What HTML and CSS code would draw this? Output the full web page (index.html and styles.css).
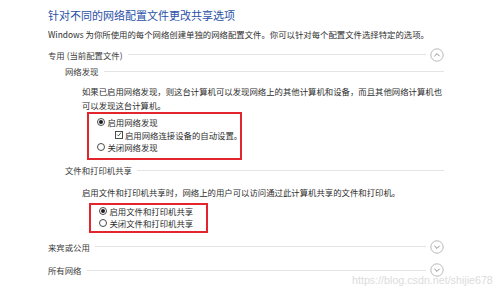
FILE: index.html
```html
<!DOCTYPE html>
<html lang="zh-CN">
<head>
    <meta charset="UTF-8">
    <title>高级共享设置</title>
    <link rel="stylesheet" href="styles.css">
</head>
<body>
    <div class="panel">
        <h1 class="title">针对不同的网络配置文件更改共享选项</h1>
        <p class="desc">Windows 为你所使用的每个网络创建单独的网络配置文件。你可以针对每个配置文件选择特定的选项。</p>

        <!-- 专用 -->
        <div class="section-row first">
            <span class="label">专用 (当前配置文件)</span>
            <span class="rule"></span>
            <svg class="toggle" width="14" height="14" viewBox="0 0 14 14">
                <circle cx="7" cy="7" r="6.2" fill="none" stroke="#b9b9b9" stroke-width="1"/>
                <path d="M4.4 8.2 L7 5.6 L9.6 8.2" fill="none" stroke="#8a8a8a" stroke-width="1"/>
            </svg>
        </div>

        <div class="sub-row discovery">
            <span class="label">网络发现</span>
            <span class="rule"></span>
        </div>
        <p class="para tall">如果已启用网络发现，则这台计算机可以发现网络上的其他计算机和设备，而且其他网络计算机也<br>可以发现这台计算机。</p>

        <div class="mark mark-discovery">
            <div class="opt"><span class="radio on"></span>启用网络发现</div>
            <div class="opt indent">
                <span class="check">
                    <svg width="7" height="7" viewBox="0 0 7 7"><path d="M1.3 3.6 L2.8 5.1 L5.8 1.4" fill="none" stroke="#222" stroke-width="0.9"/></svg>
                </span>启用网络连接设备的自动设置。
            </div>
            <div class="opt"><span class="radio"></span>关闭网络发现</div>
        </div>

        <div class="sub-row sharing">
            <span class="label">文件和打印机共享</span>
            <span class="rule"></span>
        </div>
        <p class="para single">启用文件和打印机共享时，网络上的用户可以访问通过此计算机共享的文件和打印机。</p>

        <div class="mark mark-sharing">
            <div class="opt"><span class="radio on"></span>启用文件和打印机共享</div>
            <div class="opt"><span class="radio"></span>关闭文件和打印机共享</div>
        </div>

        <!-- 来宾或公用 -->
        <div class="section-row guest">
            <span class="label">来宾或公用</span>
            <span class="rule"></span>
            <svg class="toggle" width="14" height="14" viewBox="0 0 14 14">
                <circle cx="7" cy="7" r="6.2" fill="none" stroke="#b9b9b9" stroke-width="1"/>
                <path d="M4.4 5.8 L7 8.4 L9.6 5.8" fill="none" stroke="#8a8a8a" stroke-width="1"/>
            </svg>
        </div>

        <!-- 所有网络 -->
        <div class="section-row all">
            <span class="label">所有网络</span>
            <span class="rule"></span>
            <svg class="toggle" width="14" height="14" viewBox="0 0 14 14">
                <circle cx="7" cy="7" r="6.2" fill="none" stroke="#b9b9b9" stroke-width="1"/>
                <path d="M4.4 5.8 L7 8.4 L9.6 5.8" fill="none" stroke="#8a8a8a" stroke-width="1"/>
            </svg>
        </div>
    </div>

    <div class="watermark">https://blog.csdn.net/shijie678</div>
</body>
</html>
```

FILE: styles.css
```css
/* Page */
body {
    margin: 0;
    background: #ffffff;
    font-family: "Noto Sans CJK SC", "Noto Sans", sans-serif;
    font-size: 8.4px;
    color: #2e2e2e;
    position: relative;
    width: 500px;
    height: 292px;
    overflow: hidden;
}

.panel {
    margin-left: 48px;
    width: 396px;
    padding-top: 7px;
}

.title {
    margin: 0;
    font-size: 11px;
    font-weight: normal;
    line-height: 16px;
    color: #2850a6;
    white-space: nowrap;
}

.desc {
    margin: 5px 0 0;
    line-height: 12px;
    white-space: nowrap;
}

/* Heading rows with a rule */
.section-row,
.sub-row {
    display: flex;
    align-items: center;
    color: #3a3a3a;
}

.section-row { height: 14px; }
.sub-row { height: 12px; padding-left: 17px; }

.section-row.first { margin-top: 7.5px; }
.section-row.guest { margin-top: 6.5px; }
.section-row.all { margin-top: 9.5px; }
.sub-row.discovery { margin-top: 3.5px; }
.sub-row.sharing { margin-top: 4px; }

.label {
    white-space: nowrap;
}

.rule {
    flex: 1;
    height: 1px;
    background: #e4e4e4;
    margin-left: 5px;
}

.toggle {
    flex: none;
    margin-left: 4px;
}

/* Paragraphs */
.para {
    margin: 0;
    padding-left: 34px;
    line-height: 14px;
    white-space: nowrap;
}

.para.tall { margin-top: 7px; }
.para.single { margin-top: 9px; }

/* Red annotation boxes */
.mark {
    box-sizing: border-box;
    border: 2px solid #e3262e;
}

.mark-discovery {
    margin-left: 39px;
    width: 155px;
    padding: 2px 0 4.5px 8px;
}

.mark-sharing {
    margin-top: 4px;
    margin-left: 41px;
    width: 119px;
    padding: 0 0 2px 8px;
}

.opt {
    display: flex;
    align-items: center;
    white-space: nowrap;
}

.mark-discovery .opt { height: 12.5px; }
.mark-sharing .opt { height: 12px; }

.opt.indent { padding-left: 17.5px; }

/* Radio and checkbox */
.radio {
    box-sizing: border-box;
    width: 8px;
    height: 8px;
    border: 1px solid #4a4a4a;
    border-radius: 50%;
    background: #ffffff;
    margin-right: 2.5px;
    display: flex;
    align-items: center;
    justify-content: center;
    flex: none;
}

.radio.on::after {
    content: "";
    width: 4px;
    height: 4px;
    border-radius: 50%;
    background: #1e1e1e;
}

.check {
    box-sizing: border-box;
    width: 8px;
    height: 8px;
    border: 1px solid #4a4a4a;
    margin-right: 2.5px;
    display: flex;
    align-items: center;
    justify-content: center;
    flex: none;
}

.check svg {
    display: block;
}

/* Watermark over the bottom right */
.watermark {
    position: absolute;
    left: 352px;
    top: 273px;
    font-family: "Liberation Sans", Arial, sans-serif;
    font-size: 10.7px;
    line-height: 14px;
    color: #dcdcdc;
    white-space: nowrap;
}
```
